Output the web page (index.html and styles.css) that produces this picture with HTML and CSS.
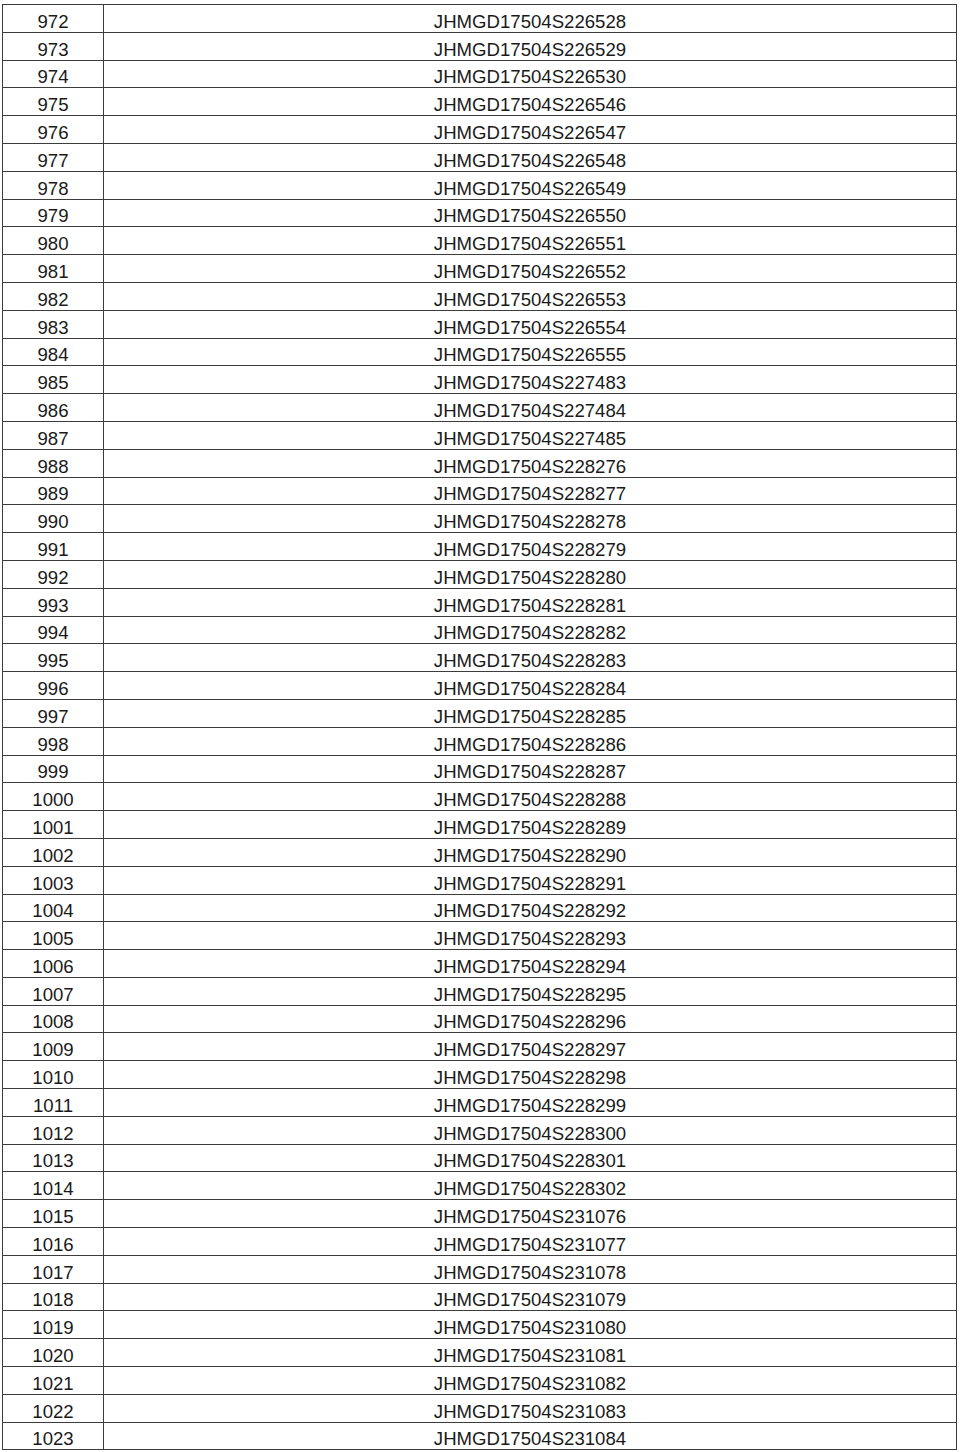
FILE: index.html
```html
<!DOCTYPE html>
<html>
<head>
<meta charset="utf-8">
<link rel="stylesheet" href="styles.css">
</head>
<body>
<table class="list">
<tbody id="rows">
<tr><td class="num">972</td><td class="code">JHMGD17504S226528</td></tr>
<tr><td class="num">973</td><td class="code">JHMGD17504S226529</td></tr>
<tr><td class="num">974</td><td class="code">JHMGD17504S226530</td></tr>
<tr><td class="num">975</td><td class="code">JHMGD17504S226546</td></tr>
<tr><td class="num">976</td><td class="code">JHMGD17504S226547</td></tr>
<tr><td class="num">977</td><td class="code">JHMGD17504S226548</td></tr>
<tr><td class="num">978</td><td class="code">JHMGD17504S226549</td></tr>
<tr><td class="num">979</td><td class="code">JHMGD17504S226550</td></tr>
<tr><td class="num">980</td><td class="code">JHMGD17504S226551</td></tr>
<tr><td class="num">981</td><td class="code">JHMGD17504S226552</td></tr>
<tr><td class="num">982</td><td class="code">JHMGD17504S226553</td></tr>
<tr><td class="num">983</td><td class="code">JHMGD17504S226554</td></tr>
<tr><td class="num">984</td><td class="code">JHMGD17504S226555</td></tr>
<tr><td class="num">985</td><td class="code">JHMGD17504S227483</td></tr>
<tr><td class="num">986</td><td class="code">JHMGD17504S227484</td></tr>
<tr><td class="num">987</td><td class="code">JHMGD17504S227485</td></tr>
<tr><td class="num">988</td><td class="code">JHMGD17504S228276</td></tr>
<tr><td class="num">989</td><td class="code">JHMGD17504S228277</td></tr>
<tr><td class="num">990</td><td class="code">JHMGD17504S228278</td></tr>
<tr><td class="num">991</td><td class="code">JHMGD17504S228279</td></tr>
<tr><td class="num">992</td><td class="code">JHMGD17504S228280</td></tr>
<tr><td class="num">993</td><td class="code">JHMGD17504S228281</td></tr>
<tr><td class="num">994</td><td class="code">JHMGD17504S228282</td></tr>
<tr><td class="num">995</td><td class="code">JHMGD17504S228283</td></tr>
<tr><td class="num">996</td><td class="code">JHMGD17504S228284</td></tr>
<tr><td class="num">997</td><td class="code">JHMGD17504S228285</td></tr>
<tr><td class="num">998</td><td class="code">JHMGD17504S228286</td></tr>
<tr><td class="num">999</td><td class="code">JHMGD17504S228287</td></tr>
<tr><td class="num">1000</td><td class="code">JHMGD17504S228288</td></tr>
<tr><td class="num">1001</td><td class="code">JHMGD17504S228289</td></tr>
<tr><td class="num">1002</td><td class="code">JHMGD17504S228290</td></tr>
<tr><td class="num">1003</td><td class="code">JHMGD17504S228291</td></tr>
<tr><td class="num">1004</td><td class="code">JHMGD17504S228292</td></tr>
<tr><td class="num">1005</td><td class="code">JHMGD17504S228293</td></tr>
<tr><td class="num">1006</td><td class="code">JHMGD17504S228294</td></tr>
<tr><td class="num">1007</td><td class="code">JHMGD17504S228295</td></tr>
<tr><td class="num">1008</td><td class="code">JHMGD17504S228296</td></tr>
<tr><td class="num">1009</td><td class="code">JHMGD17504S228297</td></tr>
<tr><td class="num">1010</td><td class="code">JHMGD17504S228298</td></tr>
<tr><td class="num">1011</td><td class="code">JHMGD17504S228299</td></tr>
<tr><td class="num">1012</td><td class="code">JHMGD17504S228300</td></tr>
<tr><td class="num">1013</td><td class="code">JHMGD17504S228301</td></tr>
<tr><td class="num">1014</td><td class="code">JHMGD17504S228302</td></tr>
<tr><td class="num">1015</td><td class="code">JHMGD17504S231076</td></tr>
<tr><td class="num">1016</td><td class="code">JHMGD17504S231077</td></tr>
<tr><td class="num">1017</td><td class="code">JHMGD17504S231078</td></tr>
<tr><td class="num">1018</td><td class="code">JHMGD17504S231079</td></tr>
<tr><td class="num">1019</td><td class="code">JHMGD17504S231080</td></tr>
<tr><td class="num">1020</td><td class="code">JHMGD17504S231081</td></tr>
<tr><td class="num">1021</td><td class="code">JHMGD17504S231082</td></tr>
<tr><td class="num">1022</td><td class="code">JHMGD17504S231083</td></tr>
<tr><td class="num">1023</td><td class="code">JHMGD17504S231084</td></tr>
</tbody>
</table>
</body>
</html>
```
FILE: styles.css
```css
html, body {
  margin: 0;
  padding: 0;
  background: #ffffff;
}
body {
  padding: 4px 0 0 2px;
  font-family: "Liberation Sans", Arial, sans-serif;
  color: #1a1a1a;
}
.list {
  border-collapse: collapse;
  width: 955px;
  table-layout: fixed;
}
.list tr {
  height: 27.8px;
}
.list td {
  border: 1px solid #3c3c3c;
  padding: 0;
  font-size: 18.6px;
  line-height: 20px;
  vertical-align: bottom;
  text-align: center;
  white-space: nowrap;
}
.list td.num {
  width: 100px;
}
```
